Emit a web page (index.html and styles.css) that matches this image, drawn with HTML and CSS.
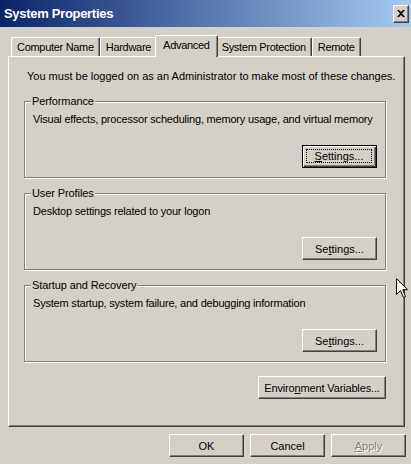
FILE: index.html
```html
<!DOCTYPE html>
<html>
<head>
<meta charset="utf-8">
<title>System Properties</title>
<link rel="stylesheet" href="styles.css">
</head>
<body>
<div class="window">
  <div class="titlebar">
    <span class="title">System Properties</span>
    <button class="close" aria-label="Close">
      <svg width="8" height="7" viewBox="0 0 8 7"><path d="M0 0h2l2 2 2-2h2L5 3.5 8 7H6L4 5 2 7H0l3-3.5z" fill="#000"/></svg>
    </button>
  </div>
  <div class="tabs">
    <div class="tab">Computer Name</div>
    <div class="tab">Hardware</div>
    <div class="tab active">Advanced</div>
    <div class="tab">System Protection</div>
    <div class="tab">Remote</div>
  </div>
  <div class="panel">
    <p class="note">You must be logged on as an Administrator to make most of these changes.</p>
    <div class="group">
      <span class="legend">Performance</span>
      <p class="desc">Visual effects, processor scheduling, memory usage, and virtual memory</p>
      <div class="actions"><button class="btn default"><span class="focus"><u>S</u>ettings...</span></button></div>
    </div>
    <div class="group">
      <span class="legend">User Profiles</span>
      <p class="desc">Desktop settings related to your logon</p>
      <div class="actions"><button class="btn">Se<u>t</u>tings...</button></div>
    </div>
    <div class="group">
      <span class="legend">Startup and Recovery</span>
      <p class="desc">System startup, system failure, and debugging information</p>
      <div class="actions"><button class="btn">Se<u>t</u>tings...</button></div>
    </div>
    <div class="env-row"><button class="btn wide">Enviro<u>n</u>ment Variables...</button></div>
  </div>
  <div class="footer">
    <button class="btn">OK</button>
    <button class="btn">Cancel</button>
    <button class="btn disabled"><u>A</u>pply</button>
  </div>
  <svg class="cursor" width="13" height="21" viewBox="0 0 13 21"><path d="M0.5 0.5V16.5L4.5 12.5L7.5 19.5L9.5 18.5L6.8 11.7H11.5Z" fill="#fff" stroke="#000" stroke-width="1"/></svg>
</div>
</body>
</html>
```
FILE: styles.css
```css
* { box-sizing: border-box; }
html, body { margin: 0; padding: 0; }
body {
  background: #d4d0c8;
  font-family: "Liberation Sans", Arial, sans-serif;
  font-size: 11px;
  color: #000;
}
.window {
  position: relative;
  width: 411px;
  height: 464px;
  background: #d4d0c8;
  overflow: hidden;
}
.titlebar {
  height: 27px;
  background: linear-gradient(to right, #0a246a, #a6caf0);
  display: flex;
  align-items: center;
  justify-content: space-between;
  padding: 0 2px 0 4px;
}
.title {
  color: #fff;
  font-weight: bold;
  font-size: 13px;
  letter-spacing: -0.3px;
}
.close {
  width: 16px;
  height: 18px;
  padding: 0;
  margin: 0;
  background: #d4d0c8;
  border: 1px solid;
  border-color: #fff #404040 #404040 #fff;
  box-shadow: inset -1px -1px 0 #808080;
  display: flex;
  align-items: center;
  justify-content: center;
}
.tabs {
  display: flex;
  align-items: flex-end;
  height: 21px;
  margin-top: 8px;
  padding-left: 11px;
}
.tab {
  height: 19px;
  padding: 2px 5px 0 5px;
  border: 1px solid;
  border-bottom: none;
  border-color: #fff #404040 transparent #fff;
  box-shadow: inset -1px 0 0 #808080;
  border-radius: 2px 2px 0 0;
  white-space: nowrap;
  line-height: 14px;
  letter-spacing: -0.3px;
}
.tab.active {
  height: 22px;
  margin: 0 -2px -1px;
  padding: 2px 7px 0 7px;
  position: relative;
  z-index: 1;
  background: #d4d0c8;
}
.panel {
  width: 397px;
  height: 371px;
  margin-left: 8px;
  border: 1px solid;
  border-color: #fff #404040 #404040 #fff;
  box-shadow: inset -1px -1px 0 #808080;
  padding-top: 13px;
}
.note {
  margin: 0 0 0 18px;
  line-height: 13px;
  white-space: nowrap;
}
.group {
  position: relative;
  height: 77px;
  margin: 18px 18px 0 15px;
  border: 1px solid #808080;
  box-shadow: inset 1px 1px 0 #fff, 1px 1px 0 #fff;
  padding: 11px 8px 0 8px;
}
.group + .group { margin-top: 15px; }
.legend {
  position: absolute;
  top: -7px;
  left: 6px;
  padding: 0 1px 0 1px;
  background: #d4d0c8;
  line-height: 13px;
  letter-spacing: -0.1px;
}
.desc {
  margin: 0;
  line-height: 13px;
  white-space: nowrap;
  letter-spacing: -0.2px;
}
.actions {
  display: flex;
  justify-content: flex-end;
  margin-top: 19px;
}
.btn {
  width: 75px;
  height: 23px;
  margin: 0;
  padding: 0;
  font: inherit;
  color: #000;
  background: #d4d0c8;
  border: 1px solid;
  border-color: #fff #404040 #404040 #fff;
  box-shadow: inset -1px -1px 0 #808080;
  display: flex;
  align-items: center;
  justify-content: center;
  white-space: nowrap;
}
.btn u { text-underline-offset: 1px; }
.btn.default {
  border: 1px solid #000;
  box-shadow: inset 1px 1px 0 #fff, inset -1px -1px 0 #404040, inset -2px -2px 0 #808080;
  padding: 3px;
}
.focus {
  flex: 1;
  align-self: stretch;
  display: flex;
  align-items: center;
  justify-content: center;
  outline: 1px dotted #000;
  outline-offset: 0;
  margin: 1px 2px 2px 1px;
}
.env-row {
  display: flex;
  justify-content: flex-end;
  margin: 14px 18px 0 0;
}
.btn.wide { width: 128px; letter-spacing: -0.15px; }
.btn.disabled {
  color: #808080;
  text-shadow: 1px 1px 0 #fff;
}
.footer {
  display: flex;
  justify-content: flex-end;
  gap: 6px;
  margin-top: 7px;
  padding-right: 5px;
}
.cursor {
  position: absolute;
  left: 396px;
  top: 278px;
}
```
